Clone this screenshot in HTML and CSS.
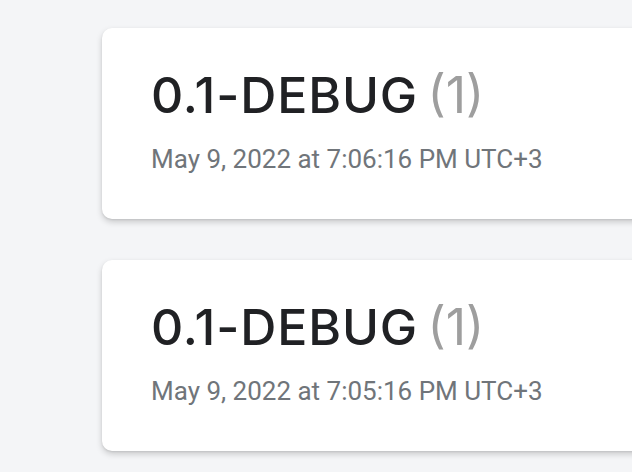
FILE: index.html
```html
<!DOCTYPE html>
<html>
<head>
<meta charset="utf-8">
<link rel="stylesheet" href="styles.css">
</head>
<body>
<main class="list">
  <section class="card">
    <h2 class="title"><span class="name">0.1-DEBUG</span> <span class="count">(1)</span></h2>
    <p class="date">May 9, 2022 at 7:06:16 PM UTC+3</p>
  </section>
  <section class="card">
    <h2 class="title"><span class="name">0.1-DEBUG</span> <span class="count">(1)</span></h2>
    <p class="date">May 9, 2022 at 7:05:16 PM UTC+3</p>
  </section>
</main>
</body>
</html>
```
FILE: styles.css
```css
html, body {
  margin: 0;
  padding: 0;
  background: #f4f5f7;
  overflow: hidden;
  width: 632px;
  height: 472px;
}
.list {
  display: flex;
  flex-direction: column;
  gap: 41px;
  padding: 28px 0 0 102px;
}
.card {
  width: 620px;
  height: 191px;
  box-sizing: border-box;
  background: #fff;
  border-radius: 10px;
  box-shadow: 0 3px 6px rgba(0,0,0,0.18), 0 1px 2px rgba(0,0,0,0.08);
  padding: 0 0 0 49px;
  display: flex;
  flex-direction: column;
}
.title {
  margin: 42px 0 0;
  font-family: Inter, Roboto, sans-serif;
  font-weight: 500;
  font-size: 50px;
  line-height: 50px;
  color: #202124;
  white-space: nowrap;
  word-spacing: -4px;
}
.name {
  letter-spacing: 0.9px;
}
.count {
  color: #9e9e9e;
  font-weight: 400;
}
.date {
  margin: 24px 0 0;
  font-family: Roboto, sans-serif;
  font-size: 26px;
  line-height: 30px;
  color: #70757a;
  white-space: nowrap;
}
```
